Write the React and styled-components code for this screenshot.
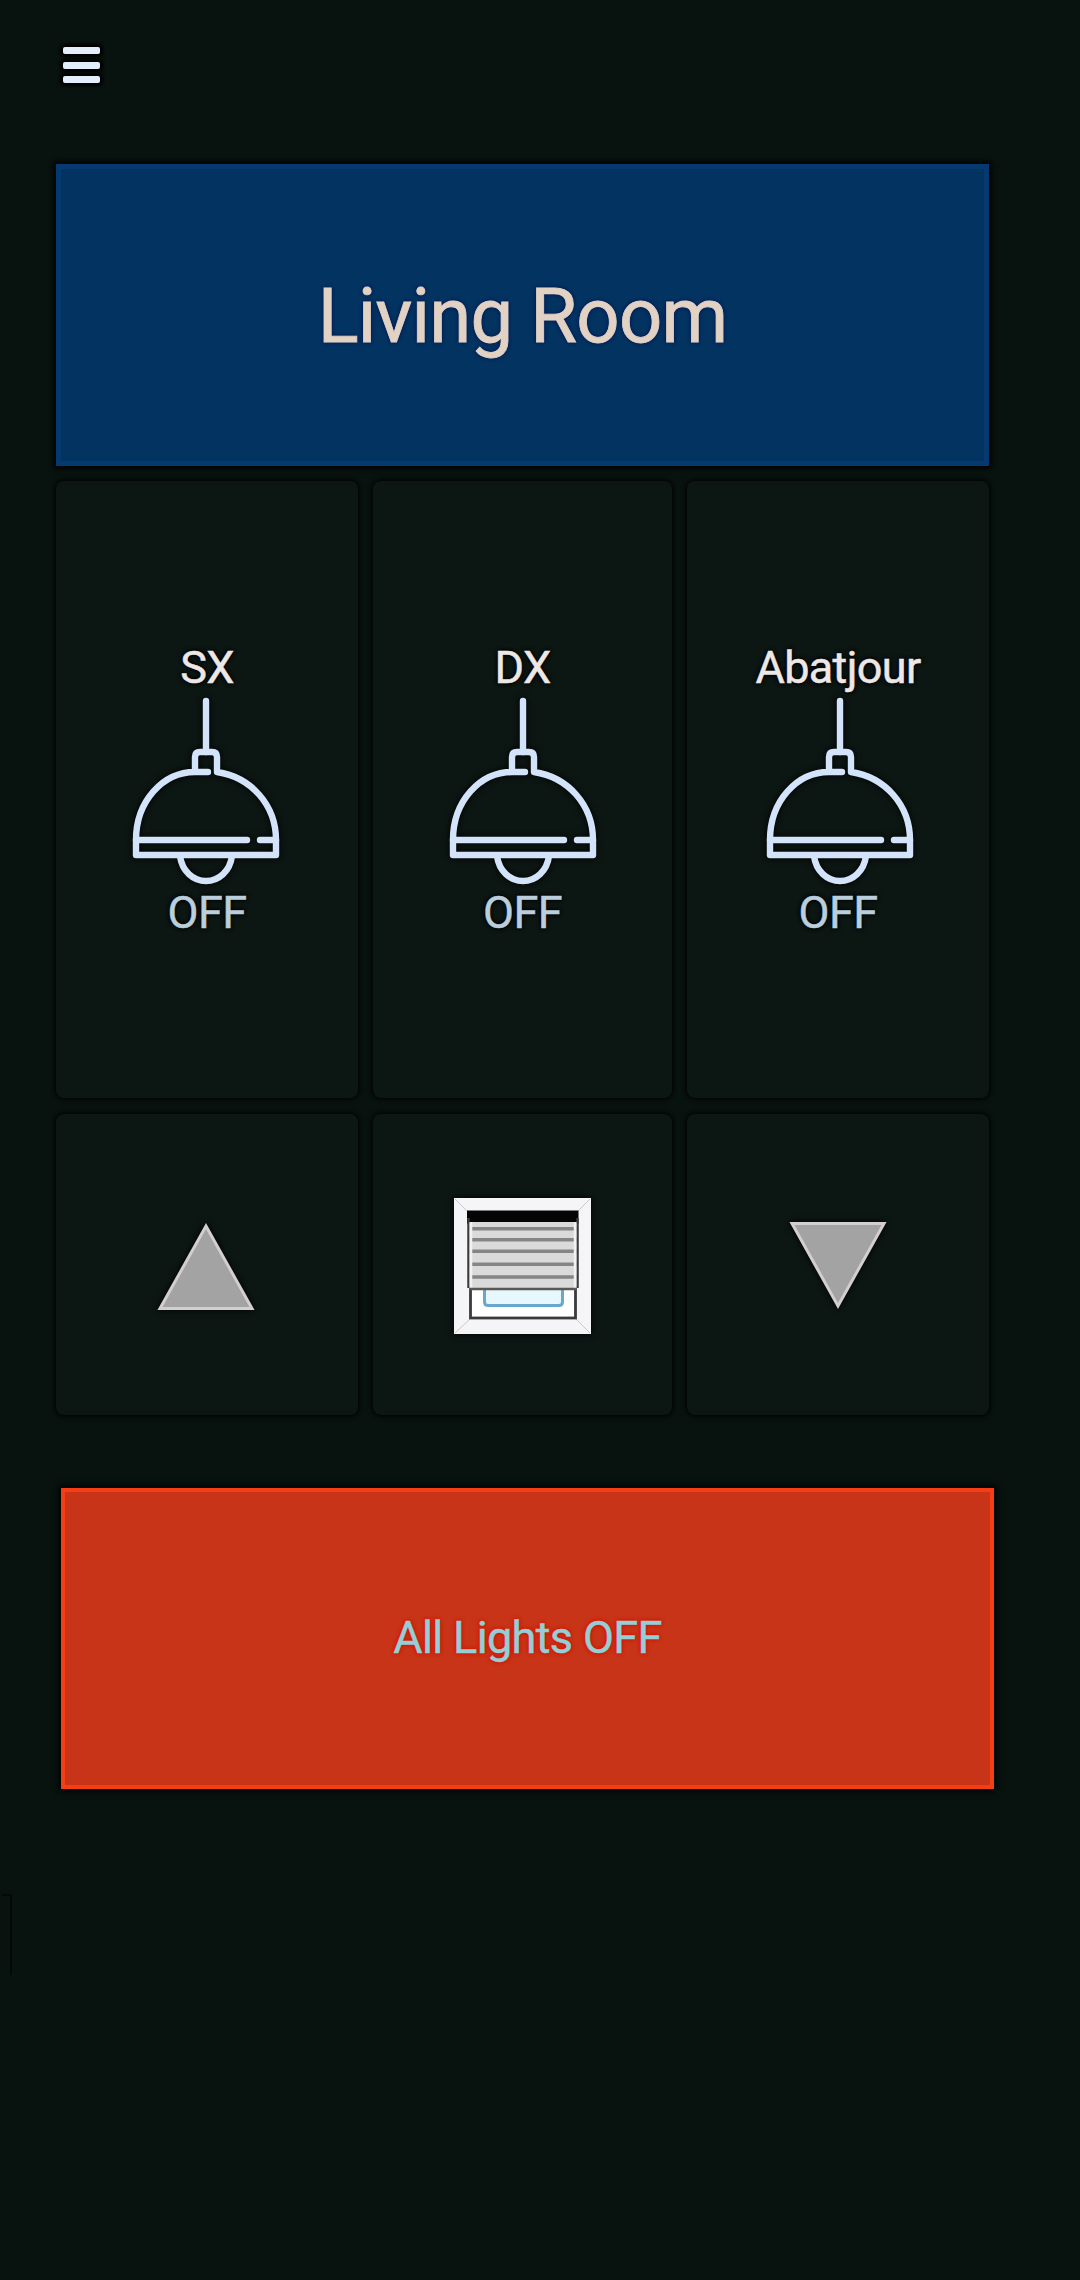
import React from "react";
import styled, { createGlobalStyle } from "styled-components";

const GlobalStyle = createGlobalStyle`
  * { box-sizing: border-box; }
  body {
    margin: 0;
    background: #08120f;
    font-family: Roboto, "Liberation Sans", sans-serif;
  }
  button { font: inherit; border: 0; padding: 0; background: none; }
`;

const Screen = styled.main`
  position: relative;
  width: 1080px;
  height: 2280px;
  padding: 0 0 0 56px;
  background: #08120f;
  overflow: hidden;
`;

const TopBar = styled.header`
  height: 163.500px;
  padding: 47px 0 0 7px;
`;

const MenuButton = styled.button`
  display: flex;
  flex-direction: column;
  gap: 7.500px;
  width: 37px;
`;

const MenuBar = styled.span`
  height: 7px;
  border-radius: 2px;
  background: #e4eefb;
  box-shadow: 0 0 3px 3px #000;
`;

const Banner = styled.section`
  display: flex;
  align-items: center;
  justify-content: center;
  width: 933px;
  height: 302px;
  padding-top: 2px;
  background: #033360;
  border: 5px solid #043a70;
  box-shadow: 0 0 5px 2px #000;
`;

const Title = styled.h1`
  margin: 0;
  font-size: 76px;
  font-weight: 400;
  line-height: 90px;
  letter-spacing: -0.8px;
  color: #e2d2c4;
  -webkit-text-stroke: 0.8px #e2d2c4;
  text-shadow: 0 0 4px #000950;
`;

const Grid = styled.section`
  display: grid;
  grid-template-columns: 302px 299px 302px;
  grid-template-rows: 617px 301px;
  column-gap: 15px;
  row-gap: 16px;
  margin-top: 15.500px;
  width: 933px;
`;

const Tile = styled.button`
  display: flex;
  flex-direction: column;
  align-items: center;
  justify-content: ${(p) => (p.$top ? "flex-start" : "center")};
  padding-top: ${(p) => (p.$top ? "161px" : "3px")};
  background: #0c1613;
  border-radius: 8px;
  box-shadow: 0 0 5px 1px #000;
`;

const Label = styled.span`
  font-size: 45px;
  line-height: 52px;
  letter-spacing: -0.65px;
  white-space: nowrap;
  color: ${(p) => p.$color};
  -webkit-text-stroke: 0.5px ${(p) => p.$color};
  text-shadow: 0 0 4px ${(p) => p.$halo || "#000"}, 0 0 4px ${(p) => p.$halo || "#000"};
`;

const LampIcon = styled.svg`
  display: block;
  width: 150px;
  height: 190px;
  margin: 3px 0 0 ${(p) => p.$nudge}px;
  overflow: visible;
  filter: drop-shadow(0 0 3px #000);
`;

const Glyph = styled.svg`
  display: block;
  margin-left: ${(p) => p.$nudge || 0}px;
  overflow: visible;
  filter: drop-shadow(0 0 3px #000);
`;

const AllOff = styled.button`
  display: flex;
  align-items: center;
  justify-content: center;
  width: 933px;
  height: 301px;
  margin: 73px 0 0 5px;
  padding-bottom: 2px;
  background: #c83417;
  border: 4px solid #f63d14;
  box-shadow: 0 0 6px 2px #000;
`;

const EdgeMark = styled.i`
  position: absolute;
  left: 2px;
  top: 1894px;
  width: 10px;
  height: 81px;
  border-top: 2px solid #030907;
  border-right: 2px solid #030907;
`;

function Lamp({ nudge }) {
  return (
    <LampIcon $nudge={nudge} viewBox="0 0 150 190" fill="none" stroke="#d3e3fa" strokeWidth="6.4" strokeLinecap="round" strokeLinejoin="round">
      <path d="M75 4V55" />
      <path d="M77 75H64V60Q64 55 69 55H81Q86 55 86 60V75C120 80 145 108 145 143V158H5V143C5 104 32 75 64 75" />
      <path d="M5 143H116M129 143H145" />
      <path d="M49 159C51 174 62 184 75 184S99 174 101 159" />
    </LampIcon>
  );
}

function Arrow({ down }) {
  return (
    <Glyph $nudge={down ? 0 : -2} width="98" height="88" viewBox="0 0 98 88">
      <path d={down ? "M3 1.5H95L49 84Z" : "M3 86.5H95L49 4Z"} fill="#a3a3a3" stroke="#d4cfcf" strokeWidth="3" />
    </Glyph>
  );
}

const slats = [30.7, 41.7, 53.3, 66.3, 79];

function Shutter() {
  return (
    <Glyph width="137" height="136" viewBox="0 0 137 136">
      <rect width="137" height="136" fill="#f5f5f7" />
      <path d="M1 1L13 13M136 1L124 13M1 135L16 121M136 135L122 121" stroke="#c9c9cf" strokeWidth="1" />
      <rect x="13" y="12.5" width="111.5" height="13" fill="#040404" />
      <path d="M14.500 20V90M123.500 20V90" stroke="#3b3b3b" strokeWidth="2.500" />
      <rect x="16.5" y="89" width="105" height="31" fill="#fff" stroke="#3b3b3b" strokeWidth="2.8" />
      <path d="M30.5 91V104Q30.5 107.5 34 107.5H105Q108.500 107.500 108.500 104V91" fill="#e6f8fd" stroke="#67a9cd" strokeWidth="3" />
      <rect x="15.500" y="24" width="107" height="67" fill="#dadada" />
      {slats.map((y) => (
        <path key={y} d={`M15.500 ${y}H122.500`} stroke="#858585" strokeWidth="3.400" />
      ))}
      <path d="M17 24V90M121 24V90" stroke="#f1f1f1" strokeWidth="2.500" />
      <path d="M15 91H123" stroke="#5c5755" strokeWidth="2.600" />
    </Glyph>
  );
}

const lights = [
  { name: "SX", nudge: -2 },
  { name: "DX", nudge: 0 },
  { name: "Abatjour", nudge: 3 },
];

export default function App() {
  return (
    <>
      <GlobalStyle />
      <Screen>
        <TopBar>
          <MenuButton aria-label="Menu">
            <MenuBar />
            <MenuBar />
            <MenuBar />
          </MenuButton>
        </TopBar>
        <Banner>
          <Title>Living Room</Title>
        </Banner>
        <Grid>
          {lights.map(({ name, nudge }) => (
            <Tile key={name} $top>
              <Label $color="#ede8e6">{name}</Label>
              <Lamp nudge={nudge} />
              <Label $color="#b9cfdd">OFF</Label>
            </Tile>
          ))}
          <Tile aria-label="Raise"><Arrow /></Tile>
          <Tile aria-label="Shutter"><Shutter /></Tile>
          <Tile aria-label="Lower"><Arrow down /></Tile>
        </Grid>
        <AllOff>
          <Label $color="#93cfd5" $halo="#d81000">All Lights OFF</Label>
        </AllOff>
        <EdgeMark />
      </Screen>
    </>
  );
}
